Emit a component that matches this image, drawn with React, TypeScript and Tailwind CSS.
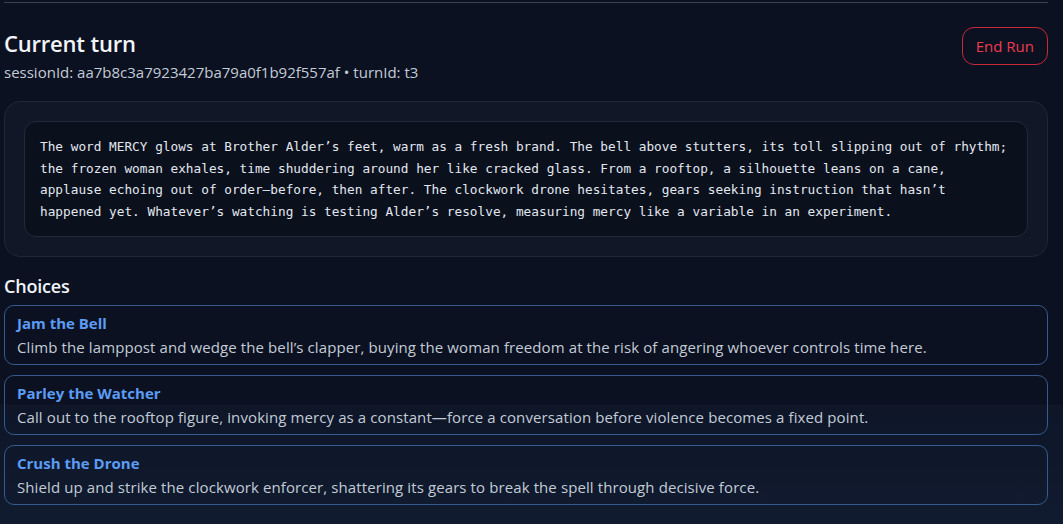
const narration = [
  "The word MERCY glows at Brother Alder’s feet, warm as a fresh brand. The bell above stutters, its toll slipping out of rhythm;",
  "the frozen woman exhales, time shuddering around her like cracked glass. From a rooftop, a silhouette leans on a cane,",
  "applause echoing out of order—before, then after. The clockwork drone hesitates, gears seeking instruction that hasn’t",
  "happened yet. Whatever’s watching is testing Alder’s resolve, measuring mercy like a variable in an experiment.",
];

const choices = [
  {
    title: "Jam the Bell",
    body: "Climb the lamppost and wedge the bell’s clapper, buying the woman freedom at the risk of angering whoever controls time here.",
  },
  {
    title: "Parley the Watcher",
    body: "Call out to the rooftop figure, invoking mercy as a constant—force a conversation before violence becomes a fixed point.",
  },
  {
    title: "Crush the Drone",
    body: "Shield up and strike the clockwork enforcer, shattering its gears to break the spell through decisive force.",
  },
];

export default function App() {
  return (
    <div className="min-h-[524px] w-full bg-[linear-gradient(180deg,#0b1120_0px,#0b1120_404px,#0e1628_405px,#111b2f_524px)] pl-1 pr-[15px] pt-[2px] font-['Open_Sans',sans-serif] text-slate-200">
      <div className="border-t border-[#3a4252]" />

      <header className="mt-[26px] flex items-start justify-between">
        <div className="min-w-0">
          <h1 className="text-[22px] font-semibold leading-[28px] tracking-[-0.2px] text-[#f1f5f9]">
            Current turn
          </h1>
          <p className="mt-[4px] text-[15px] leading-[22px] text-[#c3cbd7]">
            sessionId: aa7b8c3a7923427ba79a0f1b92f557af • turnId: t3
          </p>
        </div>
        <button className="mt-[-2px] inline-flex h-[38px] items-center rounded-[12px] border border-[#c8283a] px-[13px] text-[15px] text-[#ef3b4f]">
          End Run
        </button>
      </header>

      <section className="mt-[18px] rounded-[16px] border border-[#1f2636] bg-[#111726] p-[19px]">
        <pre className="whitespace-pre-wrap rounded-[12px] border border-[#222a3a] bg-[#0b101d] px-[15px] py-[14px] font-['DejaVu_Sans_Mono','Liberation_Mono',monospace] text-[12.75px] leading-[21.6px] text-[#e2e8f0]">
          {narration.join("\n")}
        </pre>
      </section>

      <h2 className="mt-[17px] text-[18px] font-semibold leading-[24px] tracking-[-0.2px] text-[#f1f5f9]">
        Choices
      </h2>

      <ul className="mt-[7px] flex flex-col gap-[10px]">
        {choices.map((c) => (
          <li
            key={c.title}
            className="rounded-[10px] border border-[#345a8f] px-[12px] pb-[6px] pt-[7px]"
          >
            <div className="text-[15px] font-bold leading-[21px] text-[#5b9cf5]">
              {c.title}
            </div>
            <div className="mt-[3px] text-[15px] leading-[21px] tracking-[0.1px] text-[#c3cbd7]">
              {c.body}
            </div>
          </li>
        ))}
      </ul>
    </div>
  );
}
